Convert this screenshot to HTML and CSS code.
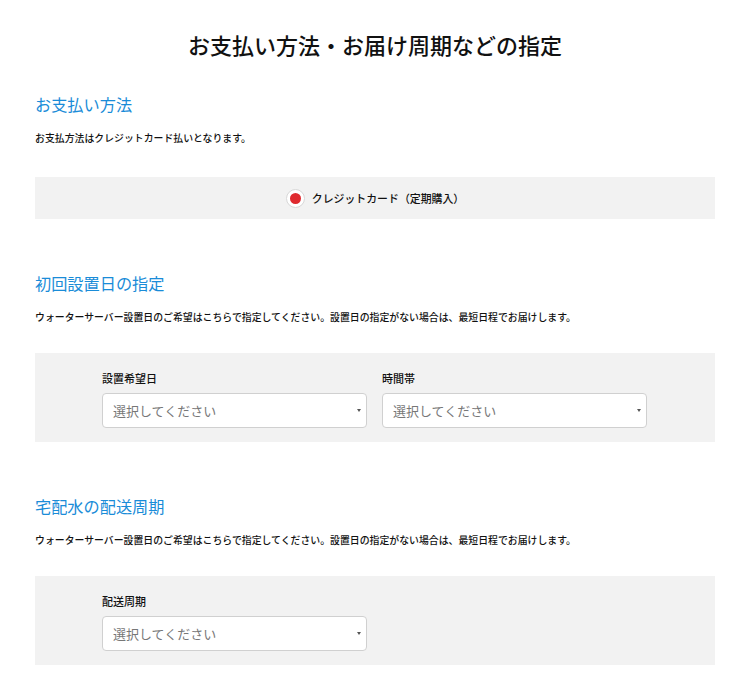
FILE: index.html
```html
<!DOCTYPE html>
<html lang="ja">
<head>
<meta charset="utf-8">
<link rel="stylesheet" href="styles.css">
</head>
<body>
<div class="page">
  <h1 class="title">お支払い方法・お届け周期などの指定</h1>

  <section class="sec sec-first">
    <h2 class="sec-head">お支払い方法</h2>
    <p class="sec-text">お支払方法はクレジットカード払いとなります。</p>
    <div class="box box-pay">
      <label class="radio">
        <span class="radio-dot"></span>
        <span class="radio-label">クレジットカード（定期購入）</span>
      </label>
    </div>
  </section>

  <section class="sec">
    <h2 class="sec-head">初回設置日の指定</h2>
    <p class="sec-text">ウォーターサーバー設置日のご希望はこちらで指定してください。設置日の指定がない場合は、最短日程でお届けします。</p>
    <div class="box box-form">
      <div class="grid">
        <div class="field">
          <div class="field-label">設置希望日</div>
          <div class="select"><span class="select-text">選択してください</span><span class="select-arrow"></span></div>
        </div>
        <div class="field">
          <div class="field-label">時間帯</div>
          <div class="select"><span class="select-text">選択してください</span><span class="select-arrow"></span></div>
        </div>
      </div>
    </div>
  </section>

  <section class="sec">
    <h2 class="sec-head">宅配水の配送周期</h2>
    <p class="sec-text">ウォーターサーバー設置日のご希望はこちらで指定してください。設置日の指定がない場合は、最短日程でお届けします。</p>
    <div class="box box-form">
      <div class="grid">
        <div class="field">
          <div class="field-label">配送周期</div>
          <div class="select"><span class="select-text">選択してください</span><span class="select-arrow"></span></div>
        </div>
      </div>
    </div>
  </section>
</div>
</body>
</html>
```

FILE: styles.css
```css
* { box-sizing: border-box; }
html, body {
  margin: 0;
  padding: 0;
  background: #fff;
  font-family: "Noto Sans CJK JP", "Noto Sans", sans-serif;
  color: #111;
}
.page {
  width: 750px;
  padding: 28px 35px 0;
}
.title {
  margin: 0;
  text-align: center;
  font-size: 22px;
  line-height: 33px;
  font-weight: 500;
  color: #111;
}
.sec { margin-top: 52px; }
.sec-first { margin-top: 31px; }
.sec-head {
  margin: 0;
  font-size: 16.2px;
  line-height: 24px;
  font-weight: 400;
  color: #1a8cd8;
}
.sec-text {
  margin: 14px 0 0;
  font-size: 9.9px;
  line-height: 16px;
  font-weight: 500;
  color: #111;
  white-space: nowrap;
}
.box {
  background: #f2f2f2;
  margin-top: 28px;
}
.sec-first .box { margin-top: 31px; }
.box-pay {
  height: 42px;
  display: flex;
  justify-content: center;
  align-items: center;
}
.radio {
  display: flex;
  align-items: center;
  gap: 7px;
}
.radio-dot {
  width: 19px;
  height: 19px;
  border-radius: 50%;
  background: #fff;
  border: 1px solid #d8d8d8;
  display: flex;
  align-items: center;
  justify-content: center;
}
.radio-dot::after {
  content: "";
  width: 11px;
  height: 11px;
  border-radius: 50%;
  background: #df2a2f;
}
.radio-label {
  font-size: 10.9px;
  font-weight: 500;
  color: #111;
}
.box-form {
  padding: 17px 68px 14px 67px;
}
.grid {
  display: grid;
  grid-template-columns: 265px 265px;
  gap: 15px;
}
.field-label {
  font-size: 11px;
  line-height: 16px;
  font-weight: 500;
  color: #111;
  margin-bottom: 7px;
}
.select {
  height: 35px;
  background: #fff;
  border: 1px solid #d0d0d0;
  border-radius: 4px;
  display: flex;
  align-items: center;
  justify-content: space-between;
  padding: 0 5px 0 10px;
}
.select-text {
  font-size: 13px;
  color: #777;
}
.select-arrow {
  width: 0;
  height: 0;
  border-left: 2px solid transparent;
  border-right: 2px solid transparent;
  border-top: 3px solid #555;
}
```
